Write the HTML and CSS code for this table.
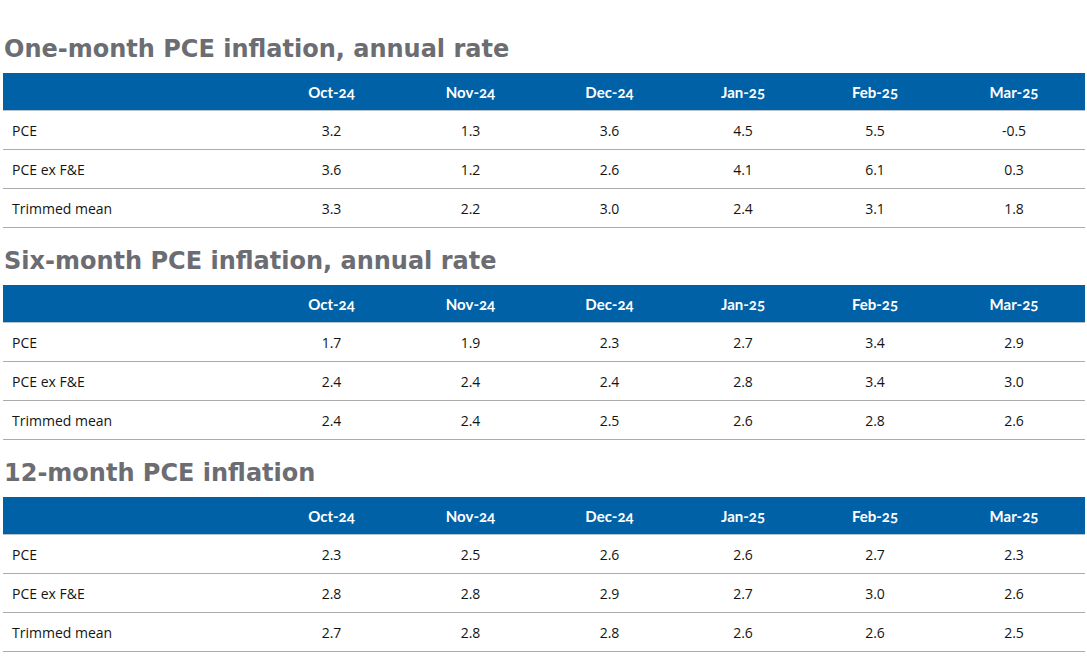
FILE: index.html
```html
<!DOCTYPE html>
<html>
<head>
<meta charset="utf-8">
<link rel="stylesheet" href="styles.css">
</head>
<body>
<div class="page">
  <section class="block">
    <h2 class="title">One-month PCE inflation, annual rate</h2>
    <table class="data">
      <colgroup><col class="c0"><col class="c1"><col class="c2"><col class="c3"><col class="c4"><col class="c5"><col class="c6"></colgroup>
      <thead><tr><th></th><th>Oct-24</th><th>Nov-24</th><th>Dec-24</th><th>Jan-25</th><th>Feb-25</th><th>Mar-25</th></tr></thead>
      <tbody>
        <tr><td>PCE</td><td>3.2</td><td>1.3</td><td>3.6</td><td>4.5</td><td>5.5</td><td>-0.5</td></tr>
        <tr><td>PCE ex F&amp;E</td><td>3.6</td><td>1.2</td><td>2.6</td><td>4.1</td><td>6.1</td><td>0.3</td></tr>
        <tr><td>Trimmed mean</td><td>3.3</td><td>2.2</td><td>3.0</td><td>2.4</td><td>3.1</td><td>1.8</td></tr>
      </tbody>
    </table>
  </section>
  <section class="block">
    <h2 class="title">Six-month PCE inflation, annual rate</h2>
    <table class="data">
      <colgroup><col class="c0"><col class="c1"><col class="c2"><col class="c3"><col class="c4"><col class="c5"><col class="c6"></colgroup>
      <thead><tr><th></th><th>Oct-24</th><th>Nov-24</th><th>Dec-24</th><th>Jan-25</th><th>Feb-25</th><th>Mar-25</th></tr></thead>
      <tbody>
        <tr><td>PCE</td><td>1.7</td><td>1.9</td><td>2.3</td><td>2.7</td><td>3.4</td><td>2.9</td></tr>
        <tr><td>PCE ex F&amp;E</td><td>2.4</td><td>2.4</td><td>2.4</td><td>2.8</td><td>3.4</td><td>3.0</td></tr>
        <tr><td>Trimmed mean</td><td>2.4</td><td>2.4</td><td>2.5</td><td>2.6</td><td>2.8</td><td>2.6</td></tr>
      </tbody>
    </table>
  </section>
  <section class="block">
    <h2 class="title">12-month PCE inflation</h2>
    <table class="data">
      <colgroup><col class="c0"><col class="c1"><col class="c2"><col class="c3"><col class="c4"><col class="c5"><col class="c6"></colgroup>
      <thead><tr><th></th><th>Oct-24</th><th>Nov-24</th><th>Dec-24</th><th>Jan-25</th><th>Feb-25</th><th>Mar-25</th></tr></thead>
      <tbody>
        <tr><td>PCE</td><td>2.3</td><td>2.5</td><td>2.6</td><td>2.6</td><td>2.7</td><td>2.3</td></tr>
        <tr><td>PCE ex F&amp;E</td><td>2.8</td><td>2.8</td><td>2.9</td><td>2.7</td><td>3.0</td><td>2.6</td></tr>
        <tr><td>Trimmed mean</td><td>2.7</td><td>2.8</td><td>2.8</td><td>2.6</td><td>2.6</td><td>2.5</td></tr>
      </tbody>
    </table>
  </section>
</div>
</body>
</html>
```
FILE: styles.css
```css
html, body {
  margin: 0;
  padding: 0;
  background: #ffffff;
}
.page {
  padding: 29px 2px 0 3px;
  display: flex;
  flex-direction: column;
  gap: 13px;
}
.block {
  display: flex;
  flex-direction: column;
}
.title {
  margin: 0;
  padding: 0 0 3px 1px;
  font-family: "DejaVu Sans", sans-serif;
  font-weight: bold;
  font-size: 24px;
  line-height: 41px;
  color: #6b6d72;
}
.data {
  width: 1082px;
  border-collapse: collapse;
  table-layout: fixed;
  font-family: "Open Sans", sans-serif;
  font-size: 14px;
  color: #141414;
}
.c0 { width: 259px; }
.c1, .c2, .c3 { width: 139px; }
.c4 { width: 128px; }
.c5 { width: 136px; }
.c6 { width: 142px; }
.data thead th {
  background: #0061a7;
  color: #ffffff;
  font-family: "Lato", sans-serif;
  font-variant-numeric: oldstyle-nums;
  font-weight: bold;
  font-size: 15px;
  height: 37px;
  padding: 0;
  text-align: center;
  border-bottom: 1px solid #b6c3cf;
}
.data tbody td {
  height: 38px;
  padding: 0;
  text-align: center;
  border-bottom: 1px solid #ababab;
}
.data tbody td:first-child {
  text-align: left;
  padding-left: 9px;
}
```
